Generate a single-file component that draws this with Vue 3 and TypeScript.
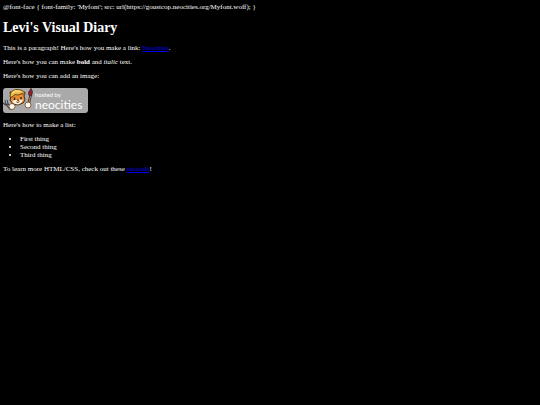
<script setup lang="ts">
const fontRule: string =
  "@font-face { font-family: 'Myfont'; src: url(https://goustcop.neocities.org/Myfont.woff); }"
const things: string[] = ['First thing', 'Second thing', 'Third thing']
</script>

<template>
  <main class="page">
    <div class="rule">{{ fontRule }}</div>
    <h1>Levi's Visual Diary</h1>
    <p>This is a paragraph! Here's how you make a link: <a href="#neocities">Neocities</a>.</p>
    <p>Here's how you can make <strong>bold</strong> and <em>italic</em> text.</p>
    <p>Here's how you can add an image:</p>
    <svg class="badge" viewBox="0 0 85 25" role="img" aria-label="hosted by neocities">
      <rect width="85" height="25" rx="3" fill="#a9a9a9" />
      <!-- wrench -->
      <path d="M3 12l1 4 4 5" fill="none" stroke="#38383a" stroke-width="3" />
      <path d="M3 12l1 4 4 5" fill="none" stroke="#a9adb1" stroke-width="1.200" />
      <path d="M0 15l3 2 2-1" fill="none" stroke="#44474a" stroke-width="1.500" />
      <!-- cat head -->
      <path d="M7 4l1 5-1 3 3 4 5 1 5-2 2-3-1-4 1-4-5 1-6-1z" fill="#e78d31" stroke="#4a2c18" stroke-width="1" />
      <path d="M9 13l3-1 3 0 3-1 2 1-2 3-3 1.500-4-1z" fill="#fff1d7" />
      <path d="M7 9c0-5 3-7.500 7-7.500s7 1 8 5l-3-1-4 1.500-3-.500-3 2.500z" fill="#f0bd48" stroke="#59401b" stroke-width=".9" />
      <path d="M9 5l3-2 6 .500" fill="none" stroke="#ffe38b" stroke-width="1.200" />
      <path d="M11.500 9.500v2.500M18 9v2.500" stroke="#35211b" stroke-width="1.400" />
      <path d="M14 12l1.500-.500.500 1-1 .500zM13 14l2 .500 2-1" fill="#66351f" stroke="#66351f" stroke-width=".5" />
      <!-- paintbrush -->
      <path d="M27.500 8l-2 8" stroke="#3d292a" stroke-width="2.600" />
      <path d="M27.500 8l-2 8" stroke="#bd9260" stroke-width="1" />
      <path d="M26 7.500l-.500-3 2.500-4 1.500 3-1 4.500z" fill="#8d2028" stroke="#441c20" stroke-width=".8" />
      <!-- paws -->
      <circle cx="9" cy="18.500" r="3" fill="#fff8e8" stroke="#694126" stroke-width=".8" />
      <circle cx="25" cy="17" r="3" fill="#fff8e8" stroke="#694126" stroke-width=".8" />
      <text class="hosted" x="32" y="9">hosted by</text>
      <text class="brand" x="32" y="21">neocities</text>
    </svg>
    <p>Here's how to make a list:</p>
    <ul>
      <li v-for="thing in things" :key="thing">{{ thing }}</li>
    </ul>
    <p>To learn more HTML/CSS, check out these <a href="#tutorials">tutorials</a>!</p>
  </main>
</template>

<style>
body {
  background: #000;
}
</style>

<style scoped>
.page {
  padding: 3px;
  color: #fff;
  font-family: "Liberation Serif", "Times New Roman", serif;
  font-size: 7px;
  line-height: 8px;
}
h1 {
  margin: 9px 0 8px;
  font-size: 14px;
  line-height: 16px;
}
p {
  margin: 0 0 6px;
}
a {
  color: #0000ee;
}
.badge {
  display: block;
  width: 85px;
  height: 25px;
  margin: 8px 0;
}
.hosted,
.brand {
  fill: #fff;
  font-family: Lato, "Liberation Sans", sans-serif;
}
.hosted {
  font-size: 6px;
}
.brand {
  font-size: 12px;
}
ul {
  margin: 0 0 6px;
  padding-left: 17px;
}
</style>
